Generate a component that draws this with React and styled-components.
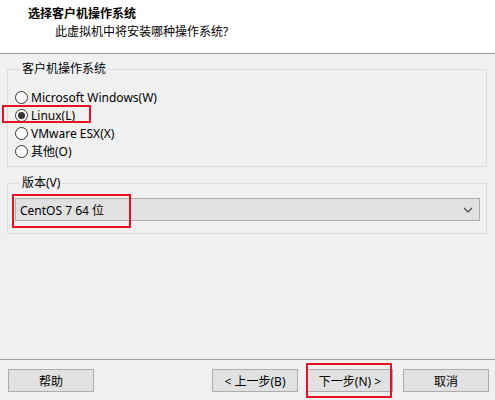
import React, { useState } from 'react';
import styled, { createGlobalStyle } from 'styled-components';

const GlobalStyle = createGlobalStyle`
  html, body {
    margin: 0;
    padding: 0;
    background: #f0f0f0;
  }
  body {
    font-family: "Noto Sans", "Noto Sans CJK SC", sans-serif;
    font-size: 12px;
    color: #000;
  }
`;

const Window = styled.div`
  width: 495px;
  height: 400px;
  display: flex;
  flex-direction: column;
  background: #f0f0f0;
  overflow: hidden;
`;

const Header = styled.div`
  height: 54px;
  box-sizing: border-box;
  background: #fff;
  border-bottom: 1px solid #a0a0a0;
  padding: 5px 0 0 28px;
`;

const Title = styled.div`
  font-weight: bold;
  line-height: 17px;
`;

const Subtitle = styled.div`
  padding-left: 27px;
  margin-top: 1px;
  line-height: 17px;
`;

const Body = styled.div`
  flex: 1;
  padding: 8px 8px 0 7px;
`;

const Group = styled.fieldset`
  margin: 0 0 ${(p) => p.$gap || 0}px 0;
  border: 1px solid #dcdcdc;
  padding: ${(p) => p.$pad};
  min-width: 0;
`;

const Caption = styled.legend`
  padding: 0 2px;
  margin-left: 5px;
  line-height: 14px;
  height: 14px;
`;

const RadioList = styled.div`
  display: flex;
  flex-direction: column;
`;

const RadioRow = styled.label`
  position: relative;
  display: flex;
  align-items: center;
  height: 18px;
  gap: 3px;
  cursor: default;
`;

const Circle = styled.span`
  width: 11px;
  height: 11px;
  border: 1px solid #333;
  border-radius: 50%;
  background: #fff;
  display: flex;
  align-items: center;
  justify-content: center;
  flex-shrink: 0;
  &::after {
    content: '';
    width: 7px;
    height: 7px;
    border-radius: 50%;
    background: #333;
    display: ${(p) => (p.$on ? 'block' : 'none')};
  }
`;

const Mark = styled.span`
  position: absolute;
  border: 2px solid #e81123;
  pointer-events: none;
  box-sizing: border-box;
`;

const Combo = styled.div`
  position: relative;
  height: 23px;
  box-sizing: border-box;
  background: #e1e1e1;
  border: 1px solid #adadad;
  display: flex;
  align-items: center;
  justify-content: space-between;
  padding: 0 6px 0 4px;
`;

const Footer = styled.div`
  border-top: 1px solid #a0a0a0;
  height: 41px;
  box-sizing: border-box;
  padding: 9px 6px 0 8px;
  display: flex;
  align-items: flex-start;
`;

const Button = styled.button`
  position: relative;
  width: 86px;
  height: 23px;
  padding: 0;
  margin-left: ${(p) => p.$ml || 0}px;
  background: #e1e1e1;
  border: 1px solid #adadad;
  font-family: inherit;
  font-size: 12px;
  color: #000;
`;

const Spacer = styled.div`
  flex: 1;
`;

const options = [
  { key: 'win', label: 'Microsoft Windows(W)' },
  { key: 'linux', label: 'Linux(L)' },
  { key: 'esx', label: 'VMware ESX(X)' },
  { key: 'other', label: '其他(O)' },
];

export default function App() {
  const [os, setOs] = useState('linux');

  return (
    <>
      <GlobalStyle />
      <Window>
        <Header>
          <Title>选择客户机操作系统</Title>
          <Subtitle>此虚拟机中将安装哪种操作系统?</Subtitle>
        </Header>
        <Body>
          <Group $pad="12px 8px 6px 7px" $gap={9}>
            <Caption>客户机操作系统</Caption>
            <RadioList>
              {options.map((o) => (
                <RadioRow key={o.key} onClick={() => setOs(o.key)}>
                  <Circle $on={os === o.key} />
                  {o.label}
                  {o.key === 'linux' && (
                    <Mark style={{ left: -13, top: -1, width: 89, height: 18 }} />
                  )}
                </RadioRow>
              ))}
            </RadioList>
          </Group>
          <Group $pad="8px 6px 12px 7px">
            <Caption>版本(V)</Caption>
            <Combo>
              <span>CentOS 7 64 位</span>
              <svg width="10" height="6" viewBox="0 0 10 6">
                <path d="M1 1 L5 5 L9 1" fill="none" stroke="#444" strokeWidth="1.2" />
              </svg>
              <Mark style={{ left: -4, top: -5, width: 119, height: 34 }} />
            </Combo>
          </Group>
        </Body>
        <Footer>
          <Button>帮助</Button>
          <Spacer />
          <Button>&lt; 上一步(B)</Button>
          <Button $ml={9}>
            下一步(N) &gt;
            <Mark style={{ left: -2, top: -7, width: 86, height: 35 }} />
          </Button>
          <Button $ml={10}>取消</Button>
        </Footer>
      </Window>
    </>
  );
}
